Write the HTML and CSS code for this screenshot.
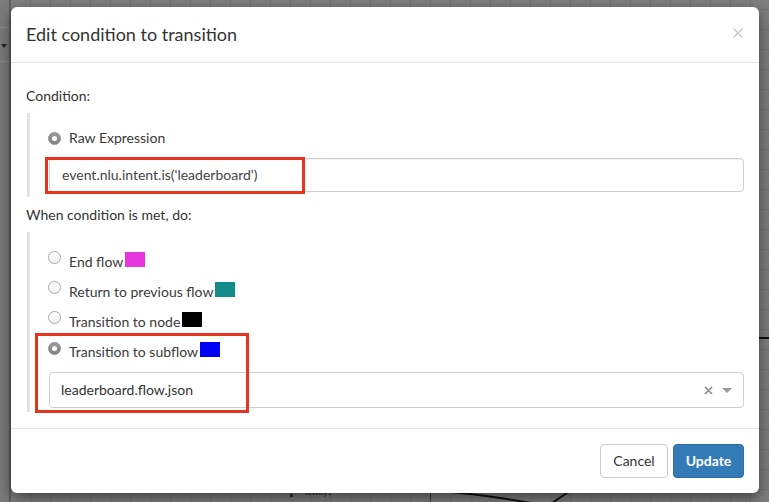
FILE: index.html
```html
<!DOCTYPE html>
<html>
<head>
<meta charset="utf-8">
<title>Edit condition to transition</title>
<link rel="stylesheet" href="styles.css">
</head>
<body>
<div class="canvas">
  <div class="sidebar">
    <div class="sidebar-tool"><span class="tool-caret"></span></div>
  </div>
  <span class="node-dot"></span>
  <span class="edge-label">always</span>
  <span class="edge-vline"></span>
  <svg class="edge-curve" width="769" height="502" viewBox="0 0 769 502">
    <path d="M440 491 C 480 494, 515 500, 548 506 M548 506 C 556 500, 562 496, 572 490" fill="none" stroke="#111" stroke-width="2"/>
    <path d="M759 338 L769 338" stroke="#111" stroke-width="2"/>
  </svg>
</div>

<div class="backdrop">
  <div class="modal">
    <div class="modal-header">
      <h4 class="modal-title">Edit condition to transition</h4>
      <button class="close" type="button" aria-label="Close">
        <svg width="10" height="10" viewBox="0 0 10 10"><path d="M0.5 0.5 L9.5 9.5 M9.5 0.5 L0.5 9.5" stroke="#c4c4c4" stroke-width="1.3" fill="none"/></svg>
      </button>
    </div>

    <div class="modal-body">
      <div class="section-label">Condition:</div>
      <div class="group group-condition">
        <div class="option option-centered">
          <span class="radio checked"></span>
          <span class="option-text">Raw Expression</span>
        </div>
        <div class="input-holder">
          <div class="form-control">event.nlu.intent.is('leaderboard')</div>
          <span class="highlight highlight-expr"></span>
        </div>
      </div>

      <div class="section-label section-label-second">When condition is met, do:</div>
      <div class="group group-actions">
        <div class="option">
          <span class="radio"></span>
          <span class="option-text">End flow<span class="swatch swatch-magenta"></span></span>
        </div>
        <div class="option">
          <span class="radio"></span>
          <span class="option-text">Return to previous flow<span class="swatch swatch-teal"></span></span>
        </div>
        <div class="option">
          <span class="radio"></span>
          <span class="option-text">Transition to node<span class="swatch swatch-black"></span></span>
        </div>
        <div class="subflow">
          <div class="option option-checked">
            <span class="radio checked"></span>
            <span class="option-text">Transition to subflow<span class="swatch swatch-blue"></span></span>
          </div>
          <div class="select">
            <span class="select-value">leaderboard.flow.json</span>
            <span class="select-actions">
              <svg class="select-clear" width="9" height="9" viewBox="0 0 9 9"><path d="M1 1 L8 8 M8 1 L1 8" stroke="#8c8c8c" stroke-width="1.6" fill="none"/></svg>
              <span class="select-caret"></span>
            </span>
          </div>
          <span class="highlight highlight-subflow"></span>
        </div>
      </div>
    </div>

    <div class="modal-footer">
      <button class="btn btn-default" type="button">Cancel</button>
      <button class="btn btn-primary" type="button">Update</button>
    </div>
  </div>
</div>
</body>
</html>
```

FILE: styles.css
```css
* {
  box-sizing: border-box;
}

html,
body {
  margin: 0;
  height: 100%;
}

body {
  position: relative;
  overflow: hidden;
  font-family: Lato, "Helvetica Neue", Arial, sans-serif;
  font-size: 14px;
  line-height: 20px;
  color: #333;
  background-color: #7f7f7f;
  background-image:
    linear-gradient(to right, #747474 1px, transparent 1px),
    linear-gradient(to bottom, #747474 1px, transparent 1px);
  background-size: 20px 20px;
  background-position: 10px 9px;
}

/* ---------- dimmed flow canvas behind the dialog ---------- */
.canvas {
  position: absolute;
  inset: 0;
}

.sidebar {
  position: absolute;
  left: 0;
  top: 0;
  bottom: 0;
  width: 11px;
  background: #7c7c7c;
  border-right: 2px solid #5f5f5f;
}

.sidebar-tool {
  margin-top: 27px;
  height: 35px;
  border-top: 1px solid #8a8a8a;
  border-bottom: 1px solid #8a8a8a;
  position: relative;
}

.tool-caret {
  position: absolute;
  left: 1px;
  top: 16px;
  width: 0;
  height: 0;
  border-left: 3px solid transparent;
  border-right: 3px solid transparent;
  border-top: 4px solid #222;
}

.node-dot {
  position: absolute;
  left: 290px;
  top: 494px;
  width: 3px;
  height: 3px;
  background: #333;
}

.edge-label {
  position: absolute;
  left: 305px;
  top: 487px;
  font-size: 9px;
  line-height: 10px;
  color: #1d1d1d;
}

.edge-vline {
  position: absolute;
  left: 430px;
  top: 488px;
  width: 1px;
  height: 14px;
  background: #3c3c3c;
}

.edge-curve {
  position: absolute;
  left: 0;
  top: 0;
}

/* ---------- modal ---------- */
.backdrop {
  position: absolute;
  inset: 0;
  padding: 7px 10px 0 11px;
}

.modal {
  width: 748px;
  background: #fff;
  border-radius: 6px;
  box-shadow: 0 5px 15px rgba(0, 0, 0, 0.5);
}

.modal-header {
  display: flex;
  justify-content: space-between;
  align-items: flex-start;
  padding: 15px 15px 15px 15px;
  border-bottom: 1px solid #e5e5e5;
}

.modal-title {
  margin: 0;
  font-size: 18px;
  line-height: 25px;
  font-weight: 400;
  color: #333;
}

.close {
  margin: 6px 1px 0 0;
  padding: 0;
  border: 0;
  background: none;
  width: 10px;
  height: 10px;
  line-height: 0;
}

.modal-body {
  padding: 23px 15px 16px 15px;
}

.section-label {
  margin-bottom: 7px;
  color: #333;
}

.section-label-second {
  margin-top: 8px;
}

.group {
  margin-left: 1px;
  border-left: 3px solid #e2e2e2;
  padding-left: 18px;
  display: flex;
  flex-direction: column;
  gap: 10px;
}

.group-condition {
  padding-top: 15px;
  padding-bottom: 5px;
}

.group-actions {
  padding-top: 20px;
  padding-bottom: 4px;
}

.option {
  display: flex;
  align-items: flex-start;
  height: 20px;
  color: #3a3a3a;
}

.option .radio {
  margin-top: -1px;
}

.option-centered {
  align-items: center;
}

.option-centered .radio,
.option-checked .radio {
  margin-top: 0;
}

.radio {
  flex: none;
  width: 13px;
  height: 13px;
  border-radius: 50%;
  border: 1px solid #a9a9a9;
  background: linear-gradient(#ffffff, #f1f1f1);
  margin-right: 8px;
  position: relative;
}

.radio.checked {
  border-color: #8a8a8a;
  background: linear-gradient(#9b9b9b, #858585);
}

.radio.checked::after {
  content: "";
  position: absolute;
  left: 3px;
  top: 3px;
  width: 5px;
  height: 5px;
  border-radius: 50%;
  background: #fff;
}

.option-text {
  line-height: 20px;
  white-space: nowrap;
}

.swatch {
  display: inline-block;
  width: 20px;
  height: 15px;
  vertical-align: top;
  margin-left: 2px;
}

.swatch-magenta { background: #e536e0; }
.swatch-teal { background: #138b8b; }
.swatch-black { background: #000; }
.swatch-blue { background: #0000f6; }

.input-holder {
  position: relative;
  margin: 0 0 0 1px;
}

.form-control {
  height: 34px;
  padding: 6px 12px;
  border: 1px solid #cfcfcf;
  border-radius: 4px;
  color: #444;
  background: #fff;
  box-shadow: inset 0 1px 1px rgba(0, 0, 0, 0.05);
}

.highlight {
  position: absolute;
  border: 3px solid #e8351f;
  pointer-events: none;
}

.highlight-expr {
  left: -4px;
  top: -1px;
  width: 260px;
  height: 37px;
}

.subflow {
  position: relative;
  display: flex;
  flex-direction: column;
  gap: 10px;
}

.select {
  margin-left: 1px;
  height: 36px;
  display: flex;
  align-items: center;
  justify-content: space-between;
  padding: 0 11px 0 11px;
  border: 1px solid #cfcfcf;
  border-radius: 4px;
  color: #333;
}

.select-actions {
  display: flex;
  align-items: center;
  gap: 9px;
}

.select-caret {
  width: 0;
  height: 0;
  border-left: 5px solid transparent;
  border-right: 5px solid transparent;
  border-top: 5px solid #9a9a9a;
  margin-top: 1px;
}

.highlight-subflow {
  left: -13px;
  top: -9px;
  width: 214px;
  height: 80px;
}

.modal-footer {
  display: flex;
  justify-content: flex-end;
  gap: 5px;
  padding: 15px;
  border-top: 1px solid #e5e5e5;
}

.btn {
  height: 34px;
  padding: 6px 0;
  font-family: inherit;
  font-size: 14px;
  line-height: 20px;
  border-radius: 4px;
  border: 1px solid transparent;
  text-align: center;
}

.btn-default {
  width: 68px;
  background: #fff;
  border-color: #ccc;
  color: #333;
}

.btn-primary {
  width: 71px;
  background: #337ab7;
  border-color: #2e6da4;
  color: #fff;
  font-weight: 700;
}
```
